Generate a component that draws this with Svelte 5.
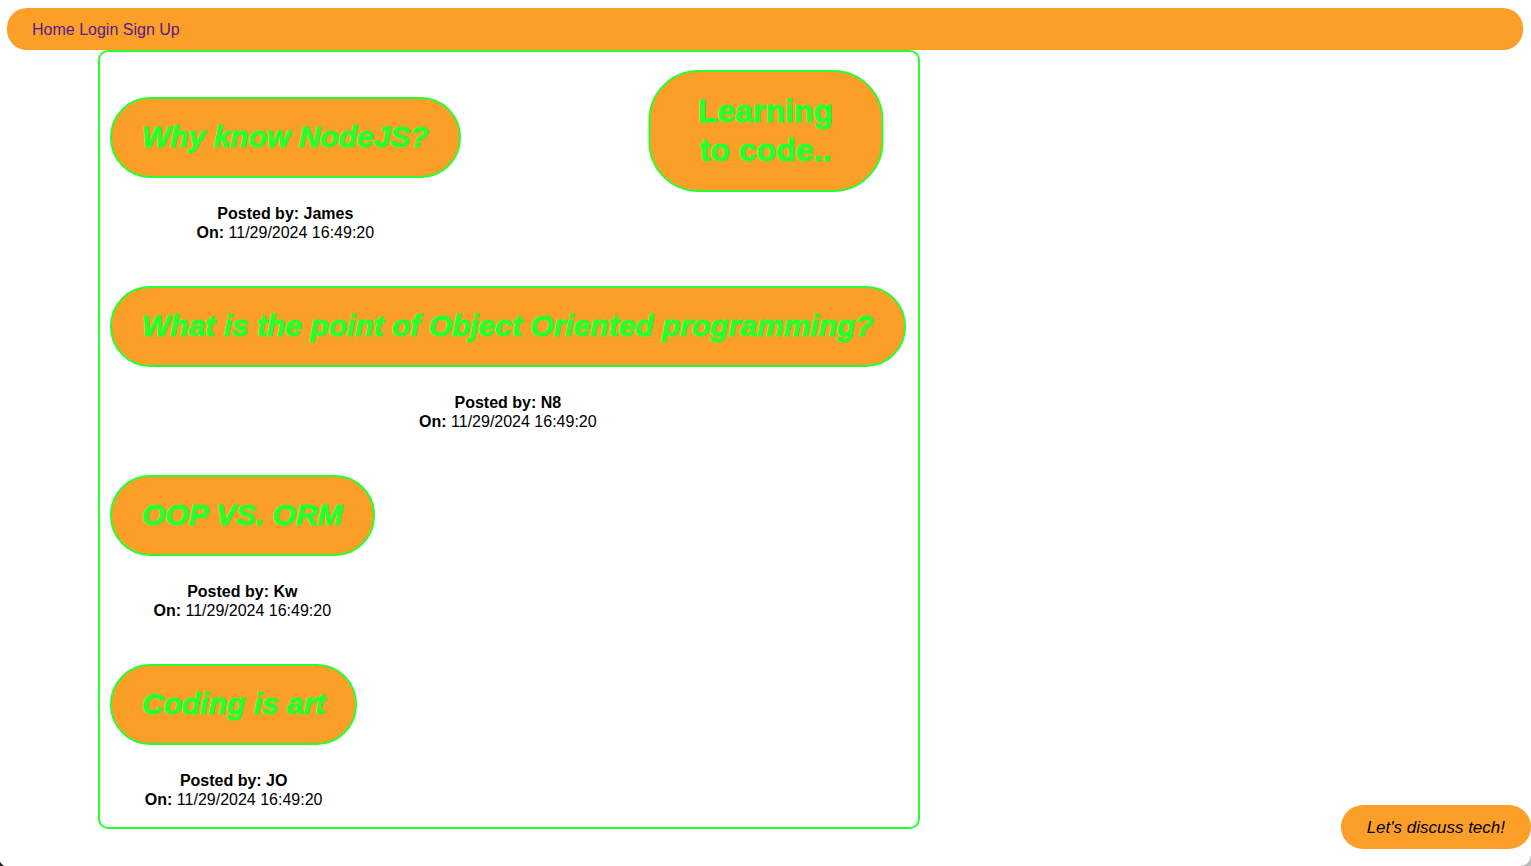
<script>
  const links = ['Home', 'Login', 'Sign Up'];
  const date = '11/29/2024 16:49:20';
  const posts = [
    { title: 'Why know NodeJS?', author: 'James' },
    { title: 'What is the point of Object Oriented programming?', author: 'N8' },
    { title: 'OOP VS. ORM', author: 'Kw' },
    { title: 'Coding is art', author: 'JO' }
  ];
</script>

<div class="page">
  <nav>
    {#each links as link}
      <a href="#top">{link}</a>{' '}
    {/each}
  </nav>

  <header><h1>Learning<br />to code..</h1></header>

  <main>
    {#each posts as post}
      <article>
        <h2><a href="#post">{post.title}</a></h2>
        <p><b>Posted by: {post.author}</b><br /><b>On:</b> {date}</p>
      </article>
    {/each}
  </main>

  <footer>Let's discuss tech!</footer>
</div>

<style>
  :global(body) {
    background: #fff;
  }
  .page {
    padding: 8px 8px 0 7px;
    font: 16px/19px "Liberation Sans", Arial, sans-serif;
    color: #000;
  }
  .page::before,
  .page::after {
    content: '';
    position: fixed;
    bottom: 0;
    width: 10px;
    height: 10px;
  }
  .page::before {
    left: 0;
    background: radial-gradient(circle at 100% 0, transparent 11px, #222 12px);
  }
  .page::after {
    right: 0;
    background: radial-gradient(circle at 0 0, transparent 9px, #bbb 10px);
  }
  nav {
    padding: 12px 25px 11px;
    border-radius: 20px;
    background: #fc9f28;
  }
  nav a {
    color: #551a8b;
    text-decoration: none;
  }
  h1,
  h2 {
    margin: 0;
    border: 2px solid #28ff30;
    background: #fc9f28;
    color: #28ff30;
    -webkit-text-stroke: 1px #28ff30;
  }
  header {
    position: absolute;
    top: 70px;
    left: 50%;
    transform: translateX(-50%);
  }
  h1 {
    padding: 20px 48px;
    border-radius: 50px;
    font-size: 32px;
    line-height: 39px;
    text-align: center;
    white-space: nowrap;
  }
  main {
    display: flex;
    flex-direction: column;
    align-items: flex-start;
    gap: 44px;
    width: max-content;
    margin-left: 91px;
    padding: 45px 12px 18px 10px;
    border: 2px solid #28ff30;
    border-radius: 10px;
  }
  article {
    text-align: center;
  }
  h2 {
    padding: 19px 30px 21px;
    border-radius: 40px;
    font-size: 30px;
    line-height: 37px;
    font-style: italic;
  }
  h2 a {
    color: inherit;
    text-decoration: none;
  }
  p {
    margin: 26px 0 0;
  }
  footer {
    position: fixed;
    right: 0;
    bottom: 17px;
    padding: 13px 26px 11px;
    border-radius: 22px;
    background: #fc9f28;
    font-size: 17px;
    line-height: 20px;
    font-style: italic;
  }
</style>
